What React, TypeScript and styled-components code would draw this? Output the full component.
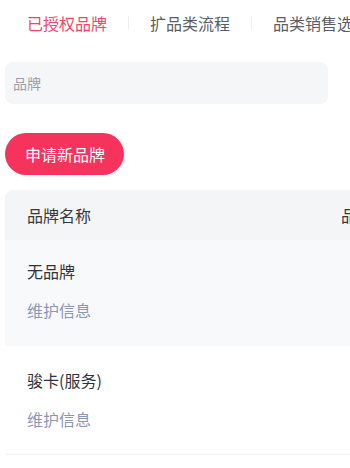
import React from "react";
import styled, { createGlobalStyle } from "styled-components";

const Global = createGlobalStyle`
  html, body { margin: 0; padding: 0; background: #ffffff; }
  body { font-family: "Noto Sans CJK SC", "Noto Sans", sans-serif; overflow: hidden; }
`;

const Page = styled.div`
  width: 350px;
  height: 468px;
  overflow: hidden;
  display: flex;
  flex-direction: column;
`;

const Tabs = styled.div`
  display: flex;
  align-items: center;
  height: 46px;
  padding-left: 6px;
  white-space: nowrap;
`;

const Tab = styled.div<{ $active?: boolean }>`
  display: flex;
  align-items: center;
  padding: 0 21px;
  font-size: 16px;
  line-height: 22px;
  color: ${(p) => (p.$active ? "#f2466a" : "#5a5e66")};
  flex-shrink: 0;
`;

const Sep = styled.div`
  width: 1px;
  height: 14px;
  background: #eceef1;
  flex-shrink: 0;
`;

const Search = styled.div`
  margin: 16px 0 0 5px;
  width: 323px;
  height: 42px;
  border-radius: 8px;
  background: #f5f6f8;
  display: flex;
  align-items: center;
  padding-left: 8px;
  box-sizing: border-box;
  font-size: 14px;
  color: #9a9ea6;
`;

const ApplyButton = styled.button`
  margin: 29px 0 0 5px;
  align-self: flex-start;
  height: 42px;
  padding: 0 19px 0 20px;
  border: none;
  border-radius: 21px;
  background: #f5335c;
  color: #ffffff;
  font-family: inherit;
  font-size: 16px;
`;

const Table = styled.div`
  margin: 15px 0 0 5px;
  width: 420px;
  display: flex;
  flex-direction: column;
`;

const HeaderRow = styled.div`
  display: flex;
  height: 50px;
  align-items: center;
  background: #f4f5f7;
  border-top-left-radius: 8px;
  font-size: 16px;
  color: #333740;
`;

const Cell = styled.div<{ $w: number }>`
  width: ${(p) => p.$w}px;
  padding-left: 22px;
  box-sizing: border-box;
  flex-shrink: 0;
`;

const Row = styled.div<{ $shaded?: boolean; $bordered?: boolean }>`
  display: flex;
  background: ${(p) => (p.$shaded ? "#f8f9fb" : "#ffffff")};
  border-bottom: ${(p) => (p.$bordered ? "1px solid #f0f1f3" : "none")};
  padding: ${(p) => (p.$shaded ? "20px 0 25px" : "23px 0 24px")};
`;

const NameCol = styled.div`
  width: 314px;
  padding-left: 22px;
  box-sizing: border-box;
  display: flex;
  flex-direction: column;
  gap: 17px;
`;

const Name = styled.div`
  font-size: 16px;
  line-height: 22px;
  color: #2f333b;
`;

const Link = styled.div`
  font-size: 16px;
  line-height: 22px;
  color: #8a97b8;
`;

const rows = [
  { name: "无品牌", shaded: true },
  { name: "骏卡(服务)", shaded: false },
];

export default function App() {
  return (
    <Page>
      <Global />
      <Tabs>
        <Tab $active>已授权品牌</Tab>
        <Sep />
        <Tab>扩品类流程</Tab>
        <Sep />
        <Tab>品类销售选择</Tab>
      </Tabs>
      <Search>品牌</Search>
      <ApplyButton>申请新品牌</ApplyButton>
      <Table>
        <HeaderRow>
          <Cell $w={314}>品牌名称</Cell>
          <Cell $w={106}>品牌状态</Cell>
        </HeaderRow>
        {rows.map((r, i) => (
          <Row key={r.name} $shaded={r.shaded} $bordered={i === rows.length - 1}>
            <NameCol>
              <Name>{r.name}</Name>
              <Link>维护信息</Link>
            </NameCol>
          </Row>
        ))}
      </Table>
    </Page>
  );
}
